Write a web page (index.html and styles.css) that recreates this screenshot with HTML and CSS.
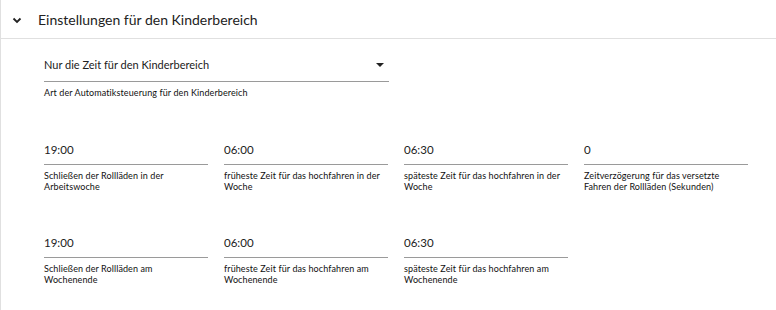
FILE: index.html
```html
<!DOCTYPE html>
<html lang="de">
<head>
  <meta charset="UTF-8">
  <title>Einstellungen</title>
  <link rel="stylesheet" href="styles.css">
</head>
<body>
  <div class="panel">
    <div class="panel-header">
      <svg class="chevron" width="10" height="8" viewBox="0 0 10 8"><path d="M1.5 2.5 L5 6 L8.5 2.5" fill="none" stroke="#222" stroke-width="1.8"/></svg>
      <span class="panel-title">Einstellungen für den Kinderbereich</span>
    </div>
    <div class="panel-body">
      <div class="field select-field">
        <div class="field-input">
          <span>Nur die Zeit für den Kinderbereich</span>
          <span class="arrow"></span>
        </div>
        <div class="field-hint">Art der Automatiksteuerung für den Kinderbereich</div>
      </div>

      <div class="grid">
        <div class="field">
          <div class="field-input">19:00</div>
          <div class="field-hint">Schließen der Rollläden in der Arbeitswoche</div>
        </div>
        <div class="field">
          <div class="field-input">06:00</div>
          <div class="field-hint">früheste Zeit für das hochfahren in der Woche</div>
        </div>
        <div class="field">
          <div class="field-input">06:30</div>
          <div class="field-hint">späteste Zeit für das hochfahren in der Woche</div>
        </div>
        <div class="field">
          <div class="field-input">0</div>
          <div class="field-hint">Zeitverzögerung für das versetzte Fahren der Rollläden (Sekunden)</div>
        </div>
        <div class="field">
          <div class="field-input">19:00</div>
          <div class="field-hint">Schließen der Rollläden am Wochenende</div>
        </div>
        <div class="field">
          <div class="field-input">06:00</div>
          <div class="field-hint">früheste Zeit für das hochfahren am Wochenende</div>
        </div>
        <div class="field">
          <div class="field-input">06:30</div>
          <div class="field-hint">späteste Zeit für das hochfahren am Wochenende</div>
        </div>
      </div>
    </div>
  </div>
</body>
</html>
```

FILE: styles.css
```css
html, body {
  margin: 0;
  padding: 0;
  background: #fff;
  font-family: Lato, "Open Sans", sans-serif;
  color: #212121;
}
.panel {
  border-left: 1px solid #e0e0e0;
  height: 310px;
  box-sizing: border-box;
}
.panel-header {
  height: 38px;
  border-bottom: 1px solid #e0e0e0;
  display: flex;
  align-items: center;
  padding-left: 11px;
}
.chevron {
  margin-right: 16px;
  margin-top: 1px;
}
.panel-title {
  font-size: 14px;
  color: #222;
}
.panel-body {
  padding: 18px 0 0 43px;
}
.field-input {
  font-size: 11.5px;
  line-height: 16px;
  padding-bottom: 6px;
  border-bottom: 1px solid #9a9a9a;
  display: flex;
  justify-content: space-between;
  align-items: center;
}
.select-field {
  width: 345px;
}
.select-field .field-input {
  font-size: 11px;
  padding-bottom: 8px;
}
.arrow {
  width: 0;
  height: 0;
  border-left: 4px solid transparent;
  border-right: 4px solid transparent;
  border-top: 4px solid #222;
  margin-right: 5px;
}
.field-hint {
  font-size: 9px;
  line-height: 11px;
  margin-top: 5px;
  color: #111;
  letter-spacing: 0.1px;
}
.grid {
  margin-top: 44px;
  display: grid;
  grid-template-columns: repeat(4, 164px);
  column-gap: 16px;
  row-gap: 43px;
}
.grid .field-hint {
  height: 22px;
}
```
